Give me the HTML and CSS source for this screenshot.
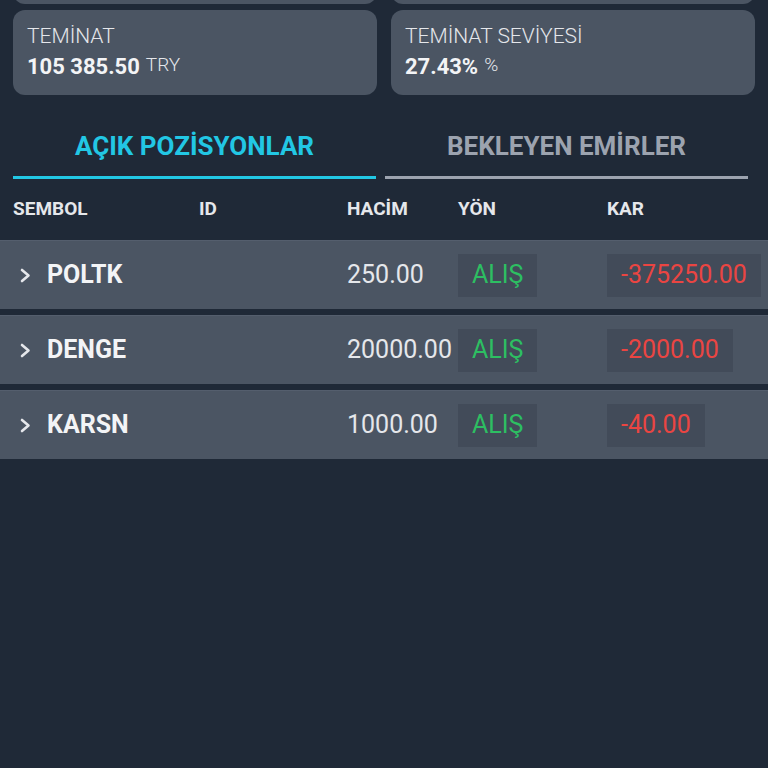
FILE: index.html
```html
<!DOCTYPE html>
<html lang="tr">
<head>
    <meta charset="UTF-8">
    <meta name="viewport" content="width=device-width, initial-scale=1.0">
    <title>Pozisyonlar</title>
    <link rel="stylesheet" href="styles.css">
</head>
<body>
    <div class="page">
        <section class="cards">
            <div class="card"></div>
            <div class="card"></div>
            <div class="card">
                <div class="card-label">TEMİNAT</div>
                <div class="card-value"><span class="amount">105 385.50</span><span class="unit">TRY</span></div>
            </div>
            <div class="card">
                <div class="card-label">TEMİNAT SEVİYESİ</div>
                <div class="card-value"><span class="amount">27.43%</span><span class="unit">%</span></div>
            </div>
        </section>

        <nav class="tabs">
            <div class="tab active">AÇIK POZİSYONLAR</div>
            <div class="tab">BEKLEYEN EMİRLER</div>
        </nav>

        <div class="table-head">
            <div>SEMBOL</div>
            <div>ID</div>
            <div>HACİM</div>
            <div>YÖN</div>
            <div>KAR</div>
        </div>

        <div class="rows">
            <div class="row">
                <div class="symbol">
                    <svg class="chevron" width="11" height="15" viewBox="0 0 11 15"><path d="M2 2 L8.5 7.5 L2 13" /></svg>
                    POLTK
                </div>
                <div></div>
                <div class="volume">250.00</div>
                <div><span class="badge buy">ALIŞ</span></div>
                <div><span class="badge loss">-375250.00</span></div>
            </div>
            <div class="row">
                <div class="symbol">
                    <svg class="chevron" width="11" height="15" viewBox="0 0 11 15"><path d="M2 2 L8.5 7.5 L2 13" /></svg>
                    DENGE
                </div>
                <div></div>
                <div class="volume">20000.00</div>
                <div><span class="badge buy">ALIŞ</span></div>
                <div><span class="badge loss">-2000.00</span></div>
            </div>
            <div class="row">
                <div class="symbol">
                    <svg class="chevron" width="11" height="15" viewBox="0 0 11 15"><path d="M2 2 L8.5 7.5 L2 13" /></svg>
                    KARSN
                </div>
                <div></div>
                <div class="volume">1000.00</div>
                <div><span class="badge buy">ALIŞ</span></div>
                <div><span class="badge loss">-40.00</span></div>
            </div>
        </div>
    </div>
</body>
</html>
```

FILE: styles.css
```css
body {
    font-family: Roboto, "Noto Sans", Arial, sans-serif;
    margin: 0;
    padding: 0;
    background-color: #1f2937;
    color: #e5e7eb;
    overflow: hidden;
}
/* page is scrolled: first card row sits mostly above the fold */
.page {
    margin-top: -81px;
}
.cards {
    display: grid;
    grid-template-columns: 1fr 1fr;
    column-gap: 14px;
    row-gap: 6px;
    padding: 0 13px;
}
.card {
    box-sizing: border-box;
    min-height: 85px;
    padding: 13px 14px 15px;
    background-color: #4b5563;
    border-radius: 12px;
}
.card-label {
    font-size: 21px;
    font-weight: 300;
    line-height: 26px;
    color: #e5e7eb;
}
.card-value {
    display: flex;
    align-items: flex-start;
    margin-top: 5px;
}
.card-value .amount {
    font-size: 22px;
    font-weight: 700;
    line-height: 26px;
    color: #f3f4f6;
}
.card-value .unit {
    margin-left: 6px;
    font-size: 19px;
    font-weight: 300;
    line-height: 22px;
    color: #e5e7eb;
}
.tabs {
    display: flex;
    gap: 9px;
    margin-top: 20px;
    padding: 0 20px 0 13px;
}
.tab {
    flex: 1;
    padding: 16px 0 15px;
    text-align: center;
    font-size: 26px;
    font-weight: 700;
    line-height: 30px;
    color: #9ca3af;
    border-bottom: 3px solid #9ca3af;
}
.tab.active {
    color: #22c7e4;
    border-bottom-color: #22c7e4;
}
.table-head,
.row {
    display: grid;
    grid-template-columns: 186px 148px 111px 149px 1fr;
    padding-left: 13px;
    align-items: center;
}
.table-head {
    margin-top: 18px;
    font-size: 19px;
    font-weight: 700;
    line-height: 24px;
    color: #e5e7eb;
}
.rows {
    display: flex;
    flex-direction: column;
    gap: 6px;
    margin-top: 19px;
}
.row {
    height: 69px;
    box-sizing: border-box;
    background-color: #4b5563;
    border-top: 1px solid #545e6d;
    font-size: 25px;
    line-height: 30px;
}
.symbol {
    display: flex;
    align-items: center;
    gap: 16px;
    font-weight: 700;
    color: #f3f4f6;
}
.chevron {
    margin-left: 7px;
}
.chevron path {
    fill: none;
    stroke: #e5e7eb;
    stroke-width: 2.6;
    stroke-linecap: round;
    stroke-linejoin: round;
}
.volume {
    color: #e5e7eb;
}
.badge {
    display: inline-block;
    padding: 6px 14px 7px;
    background-color: #424b59;
}
.badge.buy {
    color: #2dbf62;
}
.badge.loss {
    color: #ea4542;
}
```
